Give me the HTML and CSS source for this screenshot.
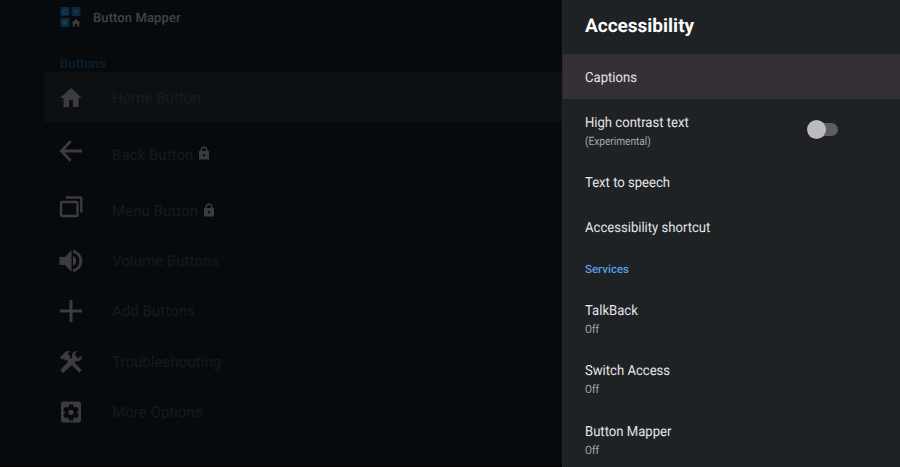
FILE: index.html
```html
<!DOCTYPE html>
<html lang="en">
<head>
<meta charset="utf-8">
<title>Button Mapper</title>
<link rel="stylesheet" href="styles.css">
</head>
<body>
<div class="screen">
  <main class="app">
    <header class="app-header">
      <svg class="logo" viewBox="0 0 20 20"><g fill="#0b2a3f"><rect width="9" height="9" rx="1"/><rect x="11" width="9" height="9" rx="1"/><rect y="11" width="9" height="9" rx="1"/></g><g fill="none" stroke="#1c3e52"><rect x="2.500" y="2.500" width="4" height="4"/><path d="M13 4.500h5M15.500 2v5"/></g><path fill="#1c3e52" d="M2 14h2l2-2v7l-2-2H2z"/><path fill="#3b3b3e" d="M15.500 12l4.500 4h-1.200v3.500h-2.200V17h-2.200v2.500h-2.200V16H11z"/></svg>
      <span>Button Mapper</span>
    </header>
    <h2 class="category">Buttons</h2>
    <ul class="rows">
      <li class="row selected"><svg class="icon" viewBox="0 0 24 24"><path d="M10 21v-7h4v7h5.500v-9H23L12 2 1 12h3.500v9z"/></svg><span>Home Button</span></li>
      <li class="row locked"><svg class="icon" viewBox="0 0 24 24"><path d="M23 10.500H5.600l7-7.200-2-2L.5 12l10.100 10.700 2-2-7-7.200H23z"/></svg><span>Back Button</span><svg class="lock" viewBox="0 0 12 14"><path fill-rule="evenodd" d="M2.500 5V4a3.500 3.500 0 0 1 7 0v1H11v8.500H1V5zM4 5h4V4a2 2 0 0 0-4 0zM6 8a1.200 1.200 0 1 0 .01 0z"/></svg></li>
      <li class="row locked"><svg class="icon line" viewBox="0 0 24 24"><rect x="2" y="7" width="16.500" height="14" rx="1"/><path d="M7 2.500h14a1.300 1.300 0 0 1 1.300 1.300V17.500"/></svg><span>Menu Button</span><svg class="lock" viewBox="0 0 12 14"><path fill-rule="evenodd" d="M2.500 5V4a3.500 3.500 0 0 1 7 0v1H11v8.500H1V5zM4 5h4V4a2 2 0 0 0-4 0zM6 8a1.200 1.200 0 1 0 .01 0z"/></svg></li>
      <li class="row"><svg class="icon" viewBox="0 0 24 24"><path d="M.5 8v8H6l6.500 7V1L6 8zM14 7v10a5.500 5.500 0 0 0 0-10zM14 .7v3a8.600 8.600 0 0 1 0 16.600v3a11.500 11.500 0 0 0 0-22.600z"/></svg><span>Volume Buttons</span></li>
      <li class="row"><svg class="icon" viewBox="0 0 24 24"><path d="M10.500 1h3v9.500H23v3h-9.500V23h-3v-9.500H1v-3h9.500z"/></svg><span>Add Buttons</span></li>
      <li class="row"><svg class="icon" viewBox="0 0 24 24"><path d="M1 7.200L7.300 1l3.900.2-2.500 2.500 2.300 2.300-.4 1.600L22.800 20.300l-2.500 2.500L8 10.300l-1.600.3-2-2L3.200 9.800zM18.200 1l-2.700 3.700 3.300 3.600 4-2.600c.5 4.200-2.400 6.300-6 5.500L4.200 23.100 1.200 20.100 13.100 7.600c-.9-3.800 1.300-6.700 5.100-6.600z"/></svg><span>Troubleshooting</span></li>
      <li class="row"><svg class="icon" viewBox="0 0 24 24"><path fill-rule="evenodd" d="M4 1.500h16a2 2 0 0 1 2 2v17a2 2 0 0 1-2 2H4a2 2 0 0 1-2-2v-17a2 2 0 0 1 2-2zM10 4.500l-.5 2.300-1.200.7-2.200-.7-2 3.400L5.800 11.800v1.400l-1.700 1.600 2 3.400 2.200-.7 1.200.7.500 2.300h4l.5-2.300 1.200-.7 2.200.7 2-3.400-1.700-1.600v-1.400l1.700-1.600-2-3.400-2.200.7-1.200-.7-.5-2.300zM12 9.700a2.700 2.700 0 1 1-.01 0z"/></svg><span>More Options</span></li>
    </ul>
  </main>
  <aside class="panel">
    <h1>Accessibility</h1>
    <div class="item focused"><span>Captions</span></div>
    <div class="item double switch-item"><div><span>High contrast text</span><small>(Experimental)</small></div><i class="switch"></i></div>
    <div class="item"><span>Text to speech</span></div>
    <div class="item"><span>Accessibility shortcut</span></div>
    <h3>Services</h3>
    <div class="item double"><span>TalkBack</span><small>Off</small></div>
    <div class="item double"><span>Switch Access</span><small>Off</small></div>
    <div class="item double"><span>Button Mapper</span><small>Off</small></div>
  </aside>
</div>
</body>
</html>
```
FILE: styles.css
```css
* { box-sizing: border-box; }
body { margin: 0; font-family: Roboto, "Liberation Sans", sans-serif; background: #070a0d; text-rendering: geometricPrecision; }
h1, h2, h3, ul { margin: 0; padding: 0; }
.screen { display: flex; width: 900px; height: 467px; overflow: hidden; }
.app { width: 562px; padding-left: 44px; background: #070a0d; border-bottom: 2px solid #020304; }
.app-header { display: flex; align-items: center; gap: 12px; height: 35px; padding: 1px 0 0 16px; color: #424245; font-size: 13px; font-weight: 500; letter-spacing: .1px; }
.logo { width: 21px; height: 20px; margin-top: -2px; }
.category { height: 37px; padding: 21px 0 0 16px; font-size: 13px; line-height: 18px; font-weight: 500; letter-spacing: .1px; color: #0a2030; }
.rows { list-style: none; }
.row { display: flex; align-items: center; height: 50.3px; padding: 1px 0 0 15px; color: #18191c; font-size: 15px; letter-spacing: .05px; }
.row.selected { background: #0c1013; color: #1a1b1e; }
.row.locked { height: 56.5px; padding-top: 8px; }
.row.locked .icon { margin-top: -8px; }
.icon { width: 24px; height: 24px; margin-right: 29px; fill: #3d3b3e; flex: none; }
.icon.line { fill: none; stroke: #3d3b3e; stroke-width: 2.300; }
.lock { width: 12px; height: 14px; margin: -3px 0 0 5px; fill: #3b3a3d; }
.panel { width: 338px; background: #1f2225; border-left: 1px solid #25282b; color: #e4e5e6; }
.panel h1 { height: 54px; padding: 13px 0 0 22px; font-size: 19px; line-height: 25px; color: #fafafa; }
.item { height: 45px; padding: 14px 0 0 22px; font-size: 14px; line-height: 20px; }
.item span, .item small { display: block; width: max-content; transform: scaleX(.935); transform-origin: left; }
.focused { background: #343036; margin-bottom: 1px; }
.double { height: 60.5px; padding-top: 13px; }
.item small { margin-top: 0; font-size: 11.5px; line-height: 16px; color: #a7a9ab; transform: scaleX(.88); }
.switch-item { display: flex; justify-content: space-between; height: 58.5px; padding-right: 62px; }
.switch { display: flex; align-items: center; width: 28px; height: 13px; margin-top: 10px; border-radius: 7px; background: #5c5e61; }
.switch::before { content: ""; flex: none; width: 19px; height: 19px; margin-left: -3px; border-radius: 50%; background: #bdbbbf; }
.panel h3 { height: 39px; padding: 12px 0 0 22px; color: #57a0e5; font-size: 11.5px; line-height: 16px; font-weight: 500; }
```
